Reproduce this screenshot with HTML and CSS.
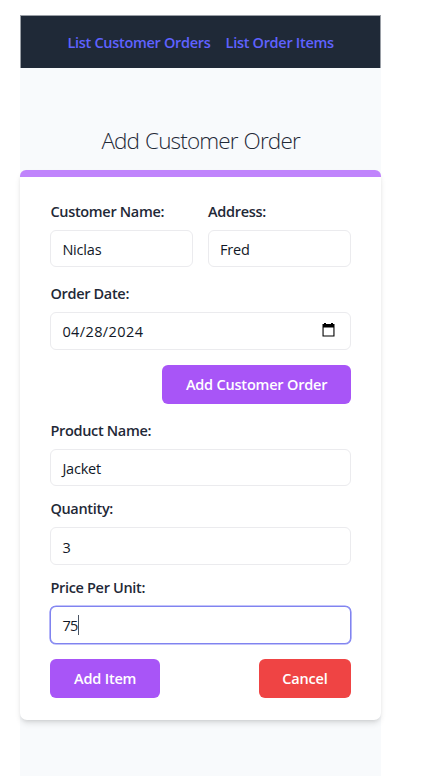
FILE: index.html
```html
<!DOCTYPE html>
<html lang="en">
<head>
<meta charset="utf-8">
<title>Add Customer Order</title>
<link rel="stylesheet" href="styles.css">
</head>
<body>
<div class="page">
  <nav class="nav">
    <a class="link-customers">List Customer Orders</a>
    <a class="link-items">List Order Items</a>
  </nav>
  <h1 class="title"><span>Add Customer Order</span></h1>
  <main class="card">
    <div class="accent"></div>
    <form class="form">
      <div class="row">
        <div class="field"><label>Customer Name:</label><div class="input"><span>Niclas</span></div></div>
        <div class="field"><label>Address:</label><div class="input"><span>Fred</span></div></div>
      </div>
      <div class="field date"><label>Order Date:</label>
        <div class="input"><span class="digits">04/28/2024</span>
          <svg class="calendar" width="13" height="14" viewBox="0 0 13 14"><path d="M2 0h2v1h5V0h2v1h1.5v12.5H.5V1H2zM1.6 4.5v7.9h9.8V4.5z" fill="#000" fill-rule="evenodd"/></svg>
        </div>
      </div>
      <div class="submit"><button type="button" class="btn wide">Add Customer Order</button></div>
      <div class="field"><label>Product Name:</label><div class="input"><span>Jacket</span></div></div>
      <div class="field"><label>Quantity:</label><div class="input"><span>3</span></div></div>
      <div class="field"><label>Price Per Unit:</label><div class="input focus"><span class="price">75</span><i class="caret"></i></div></div>
      <div class="actions"><button type="button" class="btn item">Add Item</button><button type="button" class="btn cancel">Cancel</button></div>
    </form>
  </main>
</div>
</body>
</html>
```
FILE: styles.css
```css
* { box-sizing: border-box; }
body {
  margin: 0;
  padding: 15.4px 0 0 20.4px;
  background: #fff;
  color: #1f2937;
  font-family: "Open Sans", "Noto Sans", sans-serif;
  font-size: 14.5px;
}
.page { width: 360.4px; height: 760.5px; background: #f8fafc; }
.nav {
  display: flex;
  justify-content: center;
  align-items: center;
  gap: 15px;
  height: 52.5px;
  border: 1px solid #9a9fa6;
  border-bottom: 0;
  background: #1f2937;
  font-weight: 600;
  white-space: nowrap;
}
.nav a { color: #5f62ff; letter-spacing: -0.3px; }
.title {
  display: flex;
  justify-content: center;
  align-items: center;
  height: 102px;
  margin: 0;
  padding-top: 43px;
  font-size: 22.5px;
  font-weight: 300;
  letter-spacing: -0.86px;
  word-spacing: 1px;
  white-space: nowrap;
}
.card {
  height: 550px;
  background: #fff;
  border-radius: 7px;
  box-shadow: 0 4px 6px -1px rgb(0 0 0 / .12), 0 2px 4px -2px rgb(0 0 0 / .12);
}
.accent { height: 7.5px; background: #c084fc; border-radius: 6px 6px 0 0; }
.form { padding: 22.5px 30px; }
.row { display: grid; grid-template-columns: 1fr 1fr; gap: 15px; margin-bottom: 3.5px; }
.field { margin-bottom: 11.25px; }
label {
  display: block;
  width: max-content;
  height: 22.5px;
  line-height: 23px;
  margin-bottom: 7.5px;
  font-weight: 600;
  letter-spacing: -0.32px;
  white-space: nowrap;
}
.input {
  display: flex;
  align-items: center;
  height: 37.5px;
  padding: 2px 11px 0;
  border: 1px solid #ebebee;
  border-radius: 6px;
  background: #fff;
  color: #111827;
  font-weight: 380;
  letter-spacing: -0.2px;
}
.date .input { justify-content: space-between; padding-right: 14.5px; }
.date .digits { letter-spacing: 0.4px; }
.calendar { margin-top: -3px; }
.focus { border-color: #8083ef; box-shadow: 0 0 0 .6px #8588f5; }
.price { letter-spacing: -0.6px; }
.caret { width: 1px; height: 20px; margin-top: -2px; background: #4b5563; }
.submit { display: flex; justify-content: flex-end; margin: 15px 0; }
.actions { display: flex; justify-content: space-between; margin-top: 15px; }
.btn {
  height: 39px;
  padding: 0;
  border: 0;
  border-radius: 6px;
  background: #a855f7;
  color: #fff;
  font: 600 14.5px "Open Sans", "Noto Sans", sans-serif;
  letter-spacing: -0.2px;
  line-height: 39px;
  white-space: nowrap;
}
.wide { width: 188.4px; }
.item { width: 109.5px; }
.cancel { width: 91.8px; background: #ef4444; }
```
